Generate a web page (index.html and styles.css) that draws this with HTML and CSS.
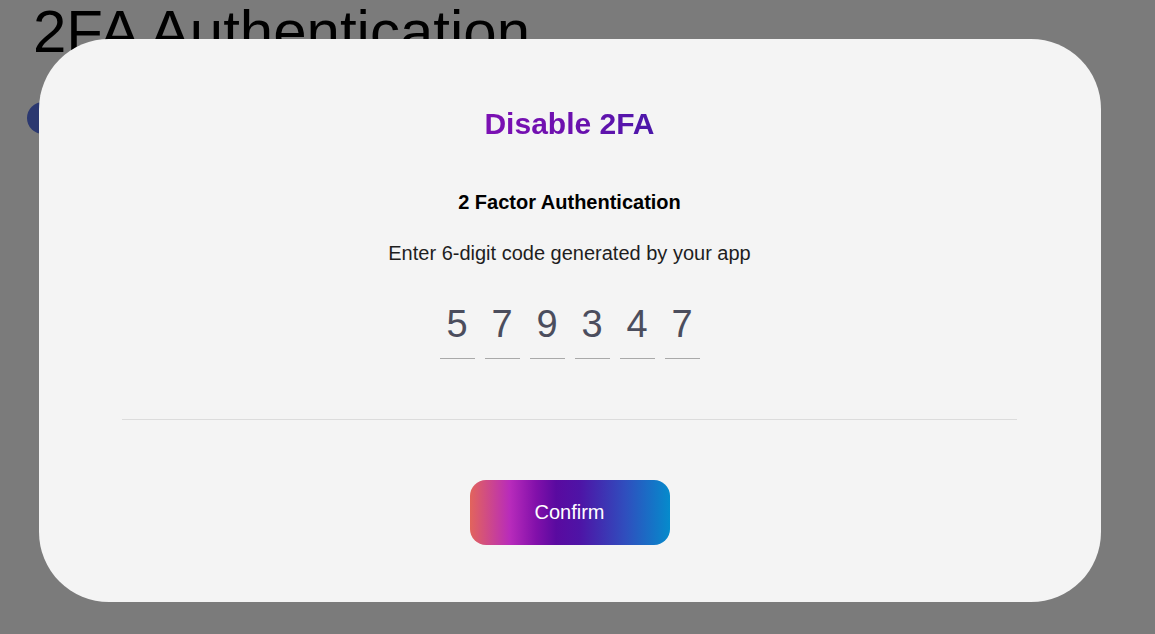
FILE: index.html
```html
<!DOCTYPE html>
<html lang="en">
<head>
<meta charset="utf-8">
<title>Disable 2FA</title>
<link rel="stylesheet" href="styles.css">
</head>
<body>
<main class="page">
  <h1 class="page-title">2FA Authentication</h1>
  <div class="page-row">
    <span class="toggle-dot"></span>
  </div>
</main>

<div class="overlay">
  <section class="modal">
    <h2 class="modal-title">Disable 2FA</h2>
    <h3 class="modal-subtitle">2 Factor Authentication</h3>
    <p class="modal-text">Enter 6-digit code generated by your app</p>
    <div class="code-row">
      <span class="code-cell">5</span>
      <span class="code-cell">7</span>
      <span class="code-cell">9</span>
      <span class="code-cell">3</span>
      <span class="code-cell">4</span>
      <span class="code-cell">7</span>
    </div>
    <hr class="modal-divider">
    <button class="confirm-btn" type="button">Confirm</button>
  </section>
</div>
</body>
</html>
```
FILE: styles.css
```css
* { box-sizing: border-box; }

html, body {
  margin: 0;
  padding: 0;
  height: 100%;
}

body {
  background: #f6f6f6;
  font-family: "Liberation Sans", Arial, sans-serif;
  overflow: hidden;
}

.page {
  padding: 0 0 0 27px;
}

.page-title {
  margin: 0 0 0 6px;
  font-size: 60px;
  font-weight: 400;
  line-height: 63px;
  color: #000;
}

.page-row {
  display: flex;
  margin-top: 39px;
}

.toggle-dot {
  width: 32px;
  height: 32px;
  border-radius: 50%;
  background: #5670e0;
}

.overlay {
  position: fixed;
  inset: 0;
  background: rgba(0, 0, 0, 0.5);
  padding: 39px 0 0 39px;
}

.modal {
  width: 1062px;
  height: 563px;
  background: #f4f4f4;
  border-radius: 70px;
  padding: 68px 84px 0 83px;
  display: flex;
  flex-direction: column;
  align-items: center;
}

.modal-title {
  margin: 0;
  font-size: 30px;
  line-height: 34px;
  font-weight: 700;
  background: linear-gradient(90deg, #7c10b3 0%, #6a10ae 55%, #4a17a9 100%);
  -webkit-background-clip: text;
  background-clip: text;
  color: transparent;
}

.modal-subtitle {
  margin: 50px 0 0;
  font-size: 20px;
  line-height: 23px;
  font-weight: 700;
  color: #000;
}

.modal-text {
  margin: 28px 0 0;
  font-size: 20px;
  line-height: 23px;
  color: #1e1e1e;
}

.code-row {
  display: flex;
  gap: 10px;
  margin-top: 35px;
}

.code-cell {
  width: 35px;
  height: 59px;
  padding-bottom: 10px;
  border-bottom: 1px solid #a9a9a9;
  font-size: 38px;
  line-height: 48px;
  text-align: center;
  color: #4b4d5d;
}

.modal-divider {
  align-self: stretch;
  margin: 60px 0 0;
  border: 0;
  border-top: 1px solid #dcdcdc;
  height: 0;
}

.confirm-btn {
  margin-top: 60px;
  width: 200px;
  height: 65px;
  border: 0;
  border-radius: 16px;
  font-family: "Liberation Sans", Arial, sans-serif;
  font-size: 20px;
  color: #fff;
  cursor: pointer;
  background: linear-gradient(90deg,
    #e2645c 0%,
    #b82bbb 20%,
    #8210aa 33%,
    #5a0aa0 43%,
    #4e14a6 55%,
    #2f4fbe 78%,
    #058bcc 100%);
}
```
